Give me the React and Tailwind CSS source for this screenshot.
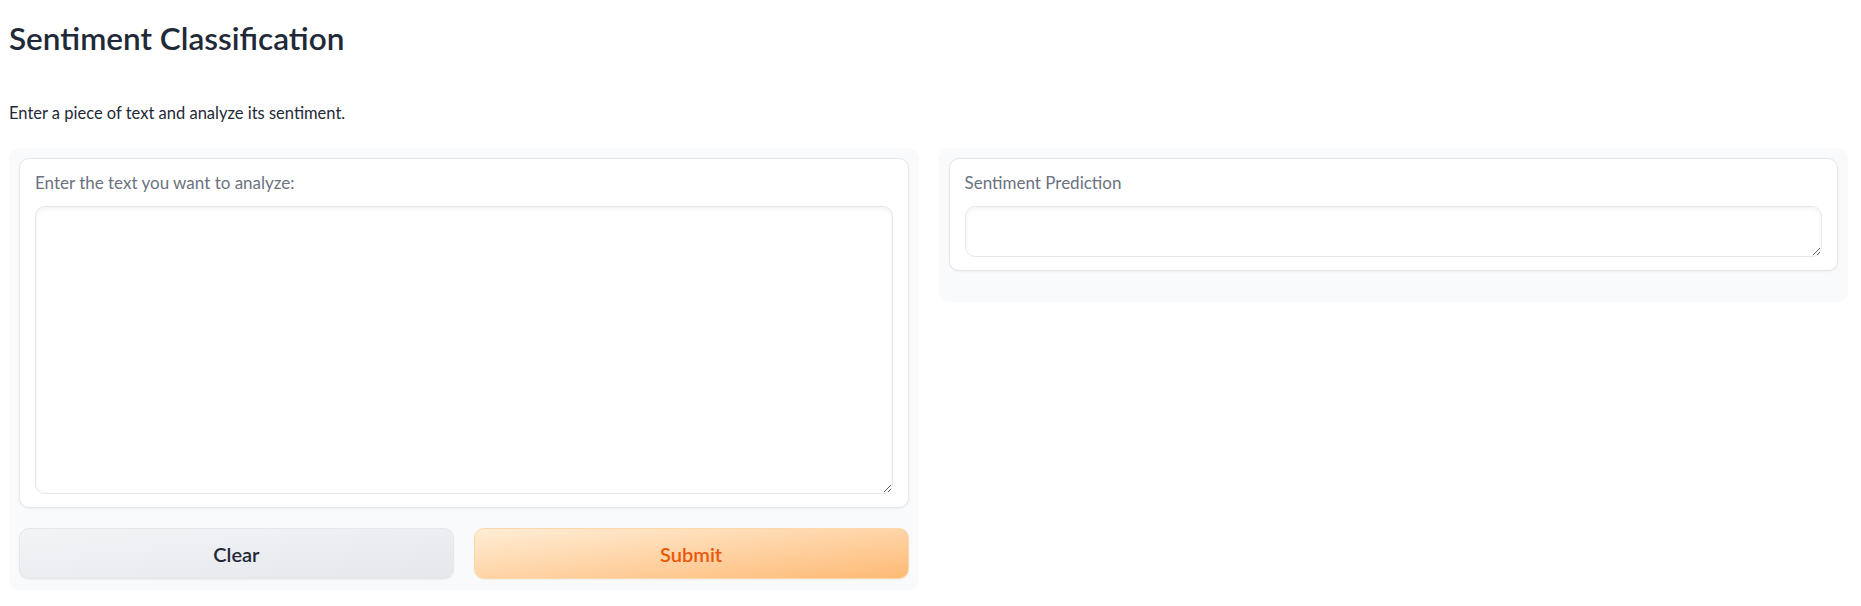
import React from "react";

export default function App() {
  const font = { fontFamily: "Lato, 'Noto Sans', sans-serif" };
  return (
    <div className="w-[1861px] h-[606px] bg-white pl-[9px] pr-[13px]" style={font}>
      <h1 className="pt-[18px] h-[62px] text-[31.5px] leading-[40px] font-semibold text-[#1f2937]">
        Sentiment Classification
      </h1>
      <p className="mt-[39px] text-[16.5px] leading-[24px] text-[#1f2937]">
        Enter a piece of text and analyze its sentiment.
      </p>
      <div className="mt-[23px] flex items-start gap-[20px]">
        <div className="flex-1 bg-[#f9fafb] rounded-[10px] p-[10px] pb-[11px]">
          <div className="bg-white border border-[#e5e7eb] rounded-[10px] px-[15px] pt-[12px] pb-[13px] shadow-[0_1px_2px_rgba(0,0,0,0.05)]">
            <div className="h-[24px] leading-[24px] text-[17px] text-[#6b7280]">
              Enter the text you want to analyze:
            </div>
            <textarea
              className="mt-[11px] block w-full h-[288px] border border-[#e5e7eb] rounded-[10px] shadow-[inset_0_2px_4px_rgba(0,0,0,0.05)] bg-white outline-none resize-y"
            />
          </div>
          <div className="mt-[20px] flex gap-[20px]">
            <button className="flex-1 h-[51px] rounded-[10px] border border-[#e5e7eb] bg-gradient-to-br from-[#f3f4f6] to-[#e5e7eb] text-[20px] font-semibold text-[#1f2937] shadow-[0_1px_2px_rgba(0,0,0,0.05)]">
              Clear
            </button>
            <button className="flex-1 h-[51px] rounded-[10px] border border-[#fed7aa] bg-gradient-to-br from-[#ffedd5] to-[#fdba74] text-[20px] font-semibold text-[#ea580c] shadow-[0_1px_2px_rgba(0,0,0,0.05)]">
              Submit
            </button>
          </div>
        </div>
        <div className="flex-1 bg-[#f9fafb] rounded-[10px] p-[10px] pb-[31px]">
          <div className="bg-white border border-[#e5e7eb] rounded-[10px] px-[15px] pt-[12px] pb-[13px] shadow-[0_1px_2px_rgba(0,0,0,0.05)]">
            <div className="h-[24px] leading-[24px] text-[17px] text-[#6b7280]">
              Sentiment Prediction
            </div>
            <textarea
              className="mt-[11px] block w-full h-[51px] border border-[#e5e7eb] rounded-[10px] shadow-[inset_0_2px_4px_rgba(0,0,0,0.05)] bg-white outline-none resize-y"
            />
          </div>
        </div>
      </div>
    </div>
  );
}
